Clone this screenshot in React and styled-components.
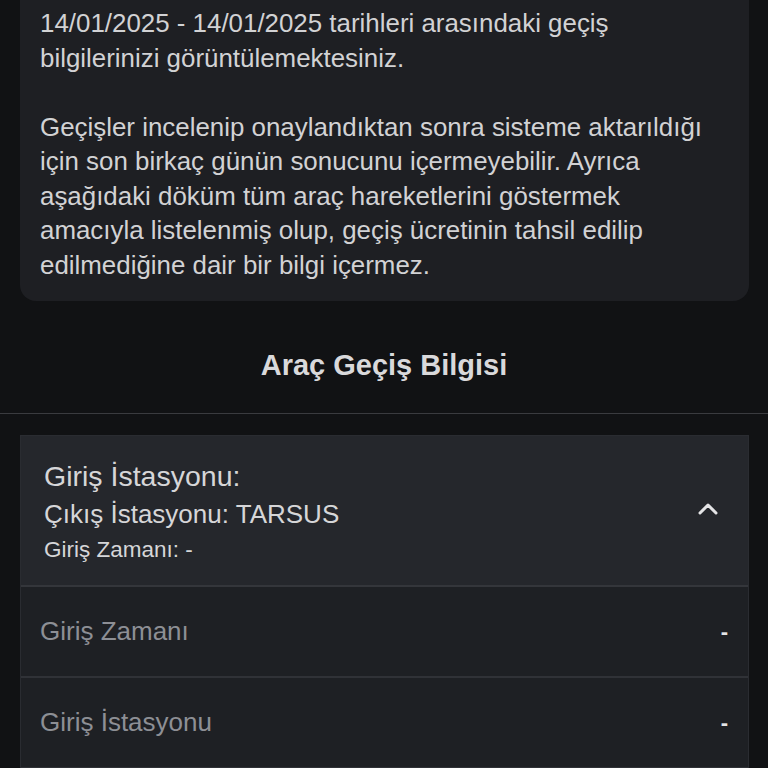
import React from 'react';
import styled, { createGlobalStyle } from 'styled-components';

const GlobalStyle = createGlobalStyle`
  html, body {
    margin: 0;
    padding: 0;
    background: #111214;
    font-family: "Liberation Sans", Arial, sans-serif;
    color: #d6d6d8;
  }
`;

const rows = [
  { label: 'Giriş Zamanı', value: '-' },
  { label: 'Giriş İstasyonu', value: '-' },
];

function ChevronUp() {
  return (
    <svg width="24" height="24" viewBox="0 0 24 24" fill="none">
      <path d="M4 13 L12 5 L20 13" stroke="#e4e4e6" strokeWidth="3" strokeLinecap="round" strokeLinejoin="round" />
    </svg>
  );
}

function App() {
  return (
    <Page>
      <GlobalStyle />
      <InfoCard>
        <InfoCard.Text>
          14/01/2025 - 14/01/2025 tarihleri arasındaki geçiş
          <br />
          bilgilerinizi görüntülemektesiniz.
          <br />
          <br />
          Geçişler incelenip onaylandıktan sonra sisteme aktarıldığı
          <br />
          için son birkaç günün sonucunu içermeyebilir. Ayrıca
          <br />
          aşağıdaki döküm tüm araç hareketlerini göstermek
          <br />
          amacıyla listelenmiş olup, geçiş ücretinin tahsil edilip
          <br />
          edilmediğine dair bir bilgi içermez.
        </InfoCard.Text>
      </InfoCard>

      <SectionTitle>Araç Geçiş Bilgisi</SectionTitle>

      <Accordion>
        <Accordion.Header>
          <Accordion.Summary>
            <Accordion.Primary>Giriş İstasyonu:</Accordion.Primary>
            <Accordion.Secondary>Çıkış İstasyonu: TARSUS</Accordion.Secondary>
            <Accordion.Meta>Giriş Zamanı: -</Accordion.Meta>
          </Accordion.Summary>
          <ChevronUp />
        </Accordion.Header>
        {rows.map((row) => (
          <DetailRow key={row.label}>
            <DetailRow.Label>{row.label}</DetailRow.Label>
            <DetailRow.Value>{row.value}</DetailRow.Value>
          </DetailRow>
        ))}
      </Accordion>
    </Page>
  );
}

const Page = styled.div`
  display: flex;
  flex-direction: column;
  min-height: 100vh;
  overflow: hidden;
`;

const InfoCard = styled.div`
  margin: -26px 19px 0 20px;
  padding: 32px 20px 19px 20px;
  background: #1e1f23;
  border-radius: 0 0 16px 16px;
`;

InfoCard.Text = styled.p`
  margin: 0;
  font-size: 25.9px;
  line-height: 34.5px;
  color: #d2d2d4;
`;

const SectionTitle = styled.h2`
  margin: 0;
  padding: 48px 0 31px;
  text-align: center;
  font-size: 29px;
  line-height: 33px;
  font-weight: 700;
  color: #d9d9db;
  border-bottom: 1px solid #3a3b3f;
`;

const Accordion = styled.div`
  margin: 21px 19px 0 20px;
  background: #1e2024;
  border: 1px solid #2a2c31;
  border-bottom: none;
`;

Accordion.Header = styled.div`
  display: flex;
  align-items: center;
  justify-content: space-between;
  padding: 23px 28px 20px 23px;
  background: #25272c;
  border-bottom: 2px solid #34363b;
`;

Accordion.Summary = styled.div`
  display: flex;
  flex-direction: column;
`;

Accordion.Primary = styled.span`
  font-size: 28.5px;
  line-height: 34px;
  color: #d6d6d8;
`;

Accordion.Secondary = styled.span`
  font-size: 26px;
  line-height: 42px;
  color: #d6d6d8;
`;

Accordion.Meta = styled.span`
  font-size: 22.5px;
  line-height: 30px;
  color: #d6d6d8;
`;

const DetailRow = styled.div`
  display: flex;
  align-items: center;
  justify-content: space-between;
  height: 89px;
  padding: 0 20px 0 19px;
  border-bottom: 2px solid #303237;
`;

DetailRow.Label = styled.span`
  font-size: 26px;
  color: #8d8f95;
`;

DetailRow.Value = styled.span`
  font-size: 22px;
  font-weight: 700;
  color: #e4e4e6;
`;

export default App;
